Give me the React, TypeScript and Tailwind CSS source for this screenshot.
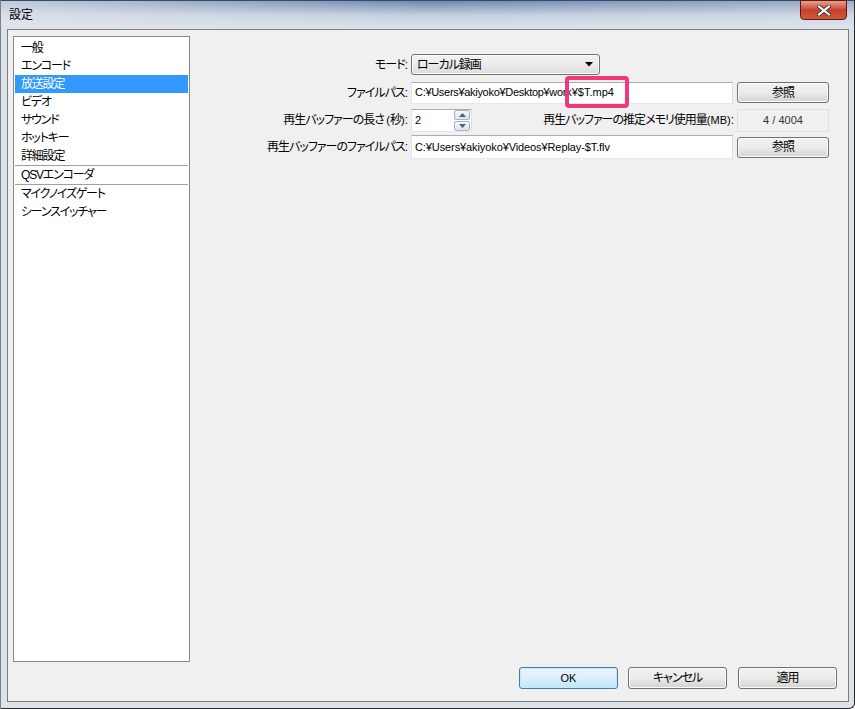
const font = {
  fontFamily: '"Liberation Sans", "Noto Sans CJK JP", sans-serif',
  fontFeatureSettings: '"palt"',
};

const items = [
  { label: "一般" },
  { label: "エンコード" },
  { label: "放送設定", selected: true },
  { label: "ビデオ" },
  { label: "サウンド" },
  { label: "ホットキー" },
  { label: "詳細設定", sepAfter: true },
  { label: "QSVエンコーダ", sepAfter: true },
  { label: "マイクノイズゲート" },
  { label: "シーンスイッチャー" },
];

const WinButton = ({ children, primary }: { children: React.ReactNode; primary?: boolean }) => (
  <div
    className={
      primary
        ? "h-full flex items-center justify-center rounded-[3px] border border-[#3c7fb1] bg-gradient-to-b from-[#eaf6fd] via-[#d9f0fc] to-[#bee6fd] shadow-[inset_0_0_0_1px_#c8e8f8] text-[12px] tracking-[-1px] text-black"
        : "h-full flex items-center justify-center rounded-[3px] border border-[#707070] bg-gradient-to-b from-[#f2f2f2] via-[#ebebeb] to-[#d3d3d3] shadow-[inset_0_0_0_1px_#fcfcfc] text-[12px] tracking-[-1px] text-black"
    }
  >
    {children}
  </div>
);

const TextBox = ({ children, className = "" }: { children: React.ReactNode; className?: string }) => (
  <div
    className={
      "relative flex items-center border border-[#abadb3] border-b-[#e3e9ef] border-l-[#e2e3ea] border-r-[#dbdfe6] bg-white pl-[3px] text-[11px] leading-[13px] text-black whitespace-nowrap " +
      className
    }
  >
    {children}
  </div>
);

const Latin = ({ children }: { children: React.ReactNode }) => (
  <span className="text-[11px] tracking-normal">{children}</span>
);

export default function App() {
  return (
    <div
      style={font}
      className="w-[855px] h-[709px] flex flex-col bg-[#dde3eb] border-r border-b border-[#2a2a2a] border-l border-l-[#7a7f88] rounded-br-[6px] overflow-hidden"
    >
      {/* title bar */}
      <div className="relative h-[29px] shrink-0 bg-gradient-to-b from-[#6f88b0] via-[#c3cede] to-[#dde3eb] border-t border-[#3b4a63]">
        <div className="absolute inset-0 bg-gradient-to-r from-[#e3e7ee]/70 via-transparent to-[#e3e7ee]/40" />
        <span className="absolute left-[8px] top-[7px] text-[12px] leading-[14px] text-black">設定</span>
        <div className="absolute right-[7px] top-[-1px] w-[47px] h-[20px] rounded-b-[4px] border border-[#5a1a10] bg-gradient-to-b from-[#e8a08c] via-[#c7412a] to-[#d2583c] flex items-center justify-center">
          <svg width="14" height="11" viewBox="0 0 14 11">
            <path d="M2 1.5 L12 9.5 M12 1.5 L2 9.5" stroke="#3a3a3a" strokeWidth="4" strokeLinecap="square" />
            <path d="M2 1.5 L12 9.5 M12 1.5 L2 9.5" stroke="#ffffff" strokeWidth="2" strokeLinecap="square" />
          </svg>
        </div>
      </div>

      {/* content */}
      <div className="ml-[6px] mr-[5px] h-[673px] flex flex-col border border-[#7c7c7c] bg-[#f0f0f0]">
        <div className="flex pt-[6px] pl-[5px]">
          {/* sidebar */}
          <div className="w-[177px] h-[626px] shrink-0 border border-[#828790] bg-white pt-[2px] px-[1px]">
            {items.map((it) => (
              <div key={it.label}>
                <div
                  className={
                    "h-[18px] flex items-center pl-[6px] text-[12px] tracking-[-1.2px] leading-none " +
                    (it.selected ? "bg-[#3399ff] text-white" : "text-black")
                  }
                >
                  {it.label}
                </div>
                {it.sepAfter && <div className="h-[1px] bg-[#a0a0a0]" />}
              </div>
            ))}
          </div>

          {/* right form */}
          <div className="flex flex-col pt-[17px] text-[12px] text-black">
            {/* mode */}
            <div className="flex items-center h-[21px] mt-[1px]">
              <div className="w-[218px] text-right pr-[1px] tracking-[-1px]">モード:</div>
              <div className="ml-[3px] w-[189px] h-[21px] rounded-[3px] border border-[#707070] bg-gradient-to-b from-[#f2f2f2] via-[#ebebeb] to-[#dcdcdc] shadow-[inset_0_0_0_1px_#fafafa] flex items-center pl-[5px] pr-[6px]">
                <span className="flex-1 tracking-[-1px]">ローカル録画</span>
                <svg width="8" height="5" viewBox="0 0 8 5">
                  <path d="M0 0 H8 L4 4.5 Z" fill="#000" />
                </svg>
              </div>
            </div>

            {/* file path */}
            <div className="flex items-center h-[23px] mt-[6px]">
              <div className="w-[218px] text-right pr-[1px] tracking-[-1px]">ファイルパス:</div>
              <TextBox className="ml-[3px] w-[322px] h-[22px]">
                <span className="tracking-[-0.3px]">C:¥Users¥akiyoko¥Desktop¥wor</span>
                <span className="relative inline-block">
                  k¥$T.mp4
                  <span className="absolute left-[-1px] top-[-10px] w-[64px] h-[32px] rounded-[4px] border-[4px] border-[#f0387a]" />
                </span>
              </TextBox>
              <div className="ml-[4px] w-[92px] h-[21px]">
                <WinButton>参照</WinButton>
              </div>
            </div>

            {/* buffer length */}
            <div className="flex items-center h-[24px] mt-[4px]">
              <div className="w-[218px] text-right pr-[1px] tracking-[-1px]">
                再生バッファーの長さ <Latin>(</Latin>秒<Latin>)</Latin>:
              </div>
              <TextBox className="ml-[3px] w-[61px] h-[23px]">
                <span className="flex-1">2</span>
                <div className="flex flex-col mr-[1px] gap-[1px]">
                  {["up", "down"].map((d) => (
                    <div
                      key={d}
                      className="w-[16px] h-[10px] rounded-[2px] border border-[#a7b2c2] bg-gradient-to-b from-[#f5f8fb] to-[#dbe3ec] flex items-center justify-center"
                    >
                      <svg width="7" height="4" viewBox="0 0 7 4">
                        <path d={d === "up" ? "M0 4 H7 L3.5 0 Z" : "M0 0 H7 L3.5 4 Z"} fill="#4a5f85" />
                      </svg>
                    </div>
                  ))}
                </div>
              </TextBox>
              <div className="w-[265px] text-right pr-[4px] tracking-[-1px]">
                再生バッファーの推定メモリ使用量<Latin>(MB)</Latin>:
              </div>
              <div className="w-[92px] h-[23px] border border-[#d9e0e6] bg-[#f0f0f0] flex items-center justify-center text-[11px] text-[#333]">
                4 / 4004
              </div>
            </div>

            {/* buffer file path */}
            <div className="flex items-center h-[24px] mt-[3px]">
              <div className="w-[218px] text-right pr-[1px] tracking-[-1px]">再生バッファーのファイルパス:</div>
              <TextBox className="ml-[3px] w-[322px] h-[24px]">
                <span className="tracking-[-0.1px]">C:¥Users¥akiyoko¥Videos¥Replay-$T.flv</span>
              </TextBox>
              <div className="ml-[4px] w-[92px] h-[21px]">
                <WinButton>参照</WinButton>
              </div>
            </div>
          </div>
        </div>

        {/* bottom buttons */}
        <div className="flex justify-end mt-[5px] pr-[11px] gap-[10px]">
          <div className="w-[99px] h-[22px]">
            <WinButton primary>
              <Latin>OK</Latin>
            </WinButton>
          </div>
          <div className="w-[99px] h-[22px]">
            <WinButton>キャンセル</WinButton>
          </div>
          <div className="w-[99px] h-[22px] ml-[1px]">
            <WinButton>適用</WinButton>
          </div>
        </div>
      </div>
    </div>
  );
}
